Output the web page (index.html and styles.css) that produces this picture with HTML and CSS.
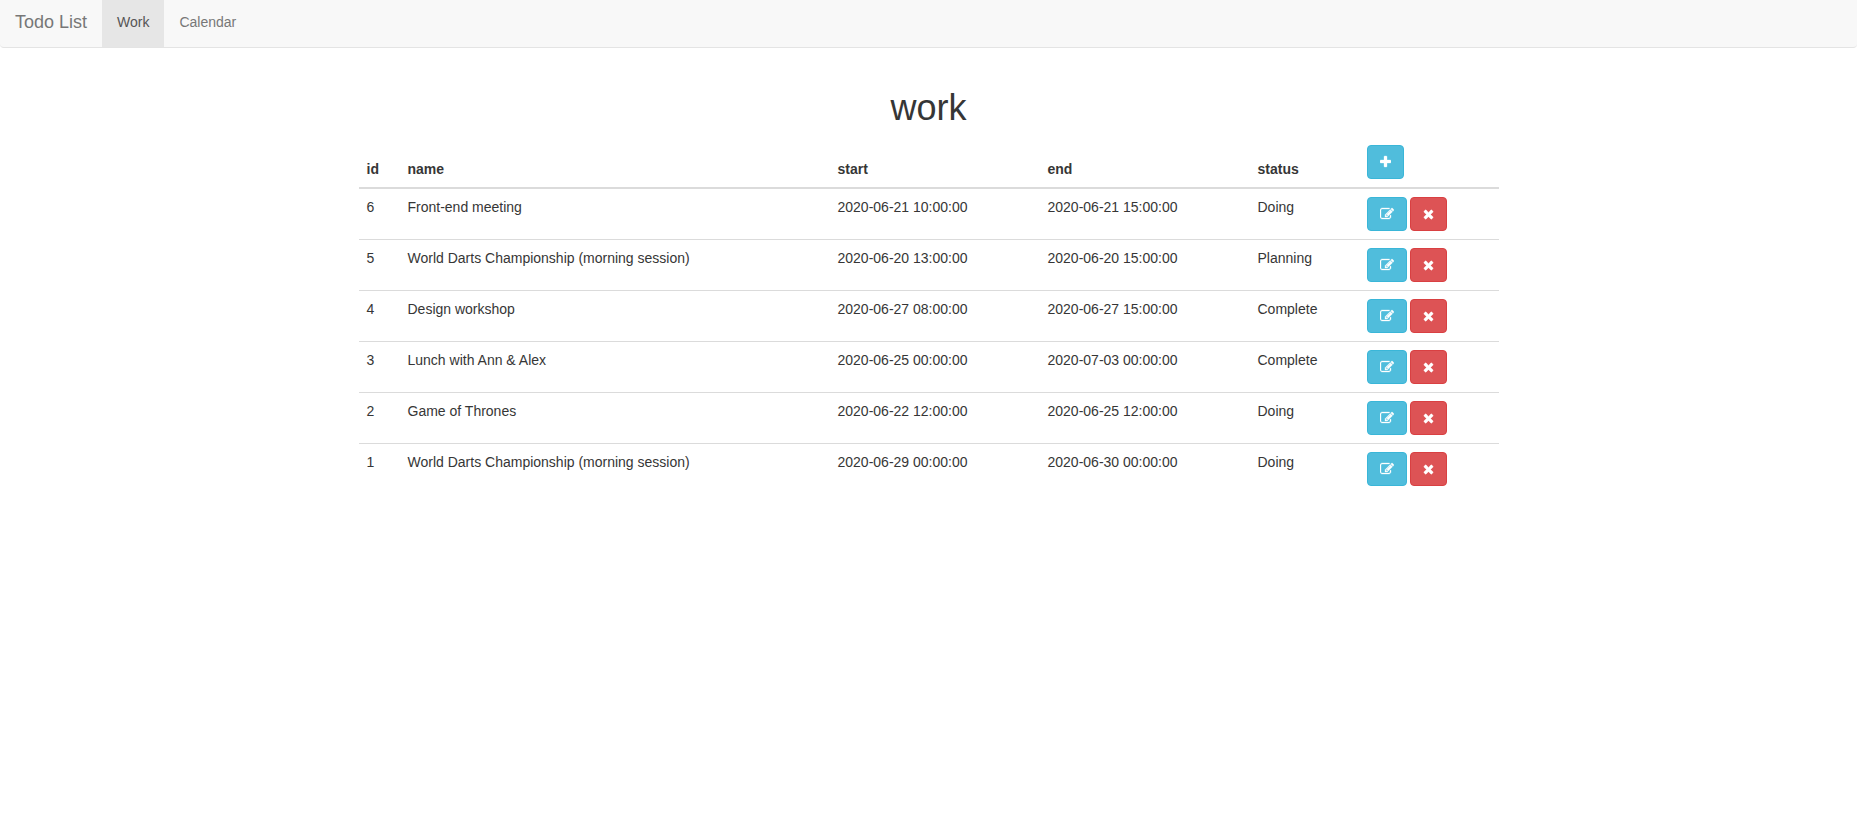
FILE: index.html
```html
<!DOCTYPE html>
<html lang="en">
<head>
<meta charset="utf-8">
<title>Todo List</title>
<link rel="stylesheet" href="styles.css">
</head>
<body>
<svg class="sprite" aria-hidden="true">
  <symbol id="plus" viewBox="192 0 1408 1792"><path d="M1600 736v192q0 40-28 68t-68 28h-416v416q0 40-28 68t-68 28h-192q-40 0-68-28t-28-68v-416h-416q-40 0-68-28t-28-68v-192q0-40 28-68t68-28h416v-416q0-40 28-68t68-28h192q40 0 68 28t28 68v416h416q40 0 68 28t28 68z"/></symbol>
  <symbol id="times" viewBox="192 0 1408 1792"><path d="M1490 1322q0 40-28 68l-136 136q-28 28-68 28t-68-28l-294-294-294 294q-28 28-68 28t-68-28l-136-136q-28-28-28-68t28-68l294-294-294-294q-28-28-28-68t28-68l136-136q28-28 68-28t68 28l294 294 294-294q28-28 68-28t68 28l136 136q28 28 28 68t-28 68l-294 294 294 294q28 28 28 68z"/></symbol>
  <symbol id="edit" viewBox="0 0 1792 1792"><path d="M888 1184l116-116-152-152-116 116v56h96v96h56zm440-720q-16-16-33 1l-350 350q-17 17-1 33t33-1l350-350q17-17 1-33zm80 594v190q0 119-84.500 203.500t-203.500 84.500h-832q-119 0-203.500-84.500t-84.500-203.500v-832q0-119 84.500-203.500t203.500-84.500h832q63 0 117 25 15 7 18 23 3 17-9 29l-49 49q-14 14-32 8-23-6-45-6h-832q-66 0-113 47t-47 113v832q0 66 47 113t113 47h832q66 0 113-47t47-113v-126q0-13 9-22l64-64q15-15 35-7t20 29zm-96-738l288 288-672 672h-288v-288zm444 132l-92 92-288-288 92-92q28-28 68-28t68 28l152 152q28 28 28 68t-28 68z"/></symbol>
</svg>
<nav class="navbar">
  <a class="brand">Todo List</a>
  <a class="nav-link active">Work</a>
  <a class="nav-link">Calendar</a>
</nav>
<main class="container">
  <h1>work</h1>
  <table class="table">
    <colgroup><col class="c-id"><col class="c-name"><col class="c-date"><col class="c-date"><col class="c-status"><col></colgroup>
    <thead>
      <tr><th>id</th><th>name</th><th>start</th><th>end</th><th>status</th><th><button class="btn info"><svg class="icon"><use href="#plus"/></svg></button></th></tr>
    </thead>
    <tbody>
      <tr><td>6</td><td>Front-end meeting</td><td>2020-06-21 10:00:00</td><td>2020-06-21 15:00:00</td><td>Doing</td><td><button class="btn info"><svg class="icon wide"><use href="#edit"/></svg></button> <button class="btn danger"><svg class="icon"><use href="#times"/></svg></button></td></tr>
      <tr><td>5</td><td>World Darts Championship (morning session)</td><td>2020-06-20 13:00:00</td><td>2020-06-20 15:00:00</td><td>Planning</td><td><button class="btn info"><svg class="icon wide"><use href="#edit"/></svg></button> <button class="btn danger"><svg class="icon"><use href="#times"/></svg></button></td></tr>
      <tr><td>4</td><td>Design workshop</td><td>2020-06-27 08:00:00</td><td>2020-06-27 15:00:00</td><td>Complete</td><td><button class="btn info"><svg class="icon wide"><use href="#edit"/></svg></button> <button class="btn danger"><svg class="icon"><use href="#times"/></svg></button></td></tr>
      <tr><td>3</td><td>Lunch with Ann &amp; Alex</td><td>2020-06-25 00:00:00</td><td>2020-07-03 00:00:00</td><td>Complete</td><td><button class="btn info"><svg class="icon wide"><use href="#edit"/></svg></button> <button class="btn danger"><svg class="icon"><use href="#times"/></svg></button></td></tr>
      <tr><td>2</td><td>Game of Thrones</td><td>2020-06-22 12:00:00</td><td>2020-06-25 12:00:00</td><td>Doing</td><td><button class="btn info"><svg class="icon wide"><use href="#edit"/></svg></button> <button class="btn danger"><svg class="icon"><use href="#times"/></svg></button></td></tr>
      <tr><td>1</td><td>World Darts Championship (morning session)</td><td>2020-06-29 00:00:00</td><td>2020-06-30 00:00:00</td><td>Doing</td><td><button class="btn info"><svg class="icon wide"><use href="#edit"/></svg></button> <button class="btn danger"><svg class="icon"><use href="#times"/></svg></button></td></tr>
    </tbody>
  </table>
</main>
</body>
</html>
```

FILE: styles.css
```css
* { box-sizing: border-box; }
body {
  margin: 0;
  background: #fff;
  color: #363636;
  font: 14px/20px "Liberation Sans", Arial, sans-serif;
}
.sprite { display: none; }
.navbar {
  display: flex;
  height: 48px;
  background: #f8f8f8;
  border-bottom: 1px solid #e4e4e4;
  border-radius: 0 0 4px 4px;
}
.brand, .nav-link { padding: 12px 15px 15px; color: #777; }
.brand { font-size: 18px; }
.nav-link.active { background: #e6e6e6; color: #555; }
.container { width: 1140px; margin: 0 auto; }
h1 {
  margin: 40px 0 10px;
  font-size: 36px;
  font-weight: 400;
  line-height: 39px;
  text-align: center;
}
.table {
  width: 100%;
  table-layout: fixed;
  border-collapse: separate;
  border-spacing: 0;
}
.c-id { width: 41px; }
.c-name { width: 430px; }
.c-date { width: 210px; }
.c-status { width: 109px; }
th, td { padding: 8px; text-align: left; }
th { vertical-align: bottom; border-bottom: 2px solid #dbdbdb; }
td { vertical-align: top; border-bottom: 1px solid #dbdbdb; }
tbody tr:last-child td { border-bottom: 0; }
.btn {
  display: inline-block;
  height: 34px;
  padding: 6px 12px;
  border: 1px solid;
  border-radius: 4px;
  color: #fff;
  font: inherit;
  line-height: 20px;
  vertical-align: middle;
}
.btn + .btn { margin-left: -0.5px; }
.info { background: #50bddc; border-color: #3ab6d8; }
.danger { background: #dd5355; border-color: #d94042; }
.icon {
  display: block;
  width: 11px;
  height: 14px;
  margin: 3px 0;
  fill: currentColor;
  stroke: currentColor;
  stroke-width: 40px;
}
.icon.wide { width: 14px; }
```
